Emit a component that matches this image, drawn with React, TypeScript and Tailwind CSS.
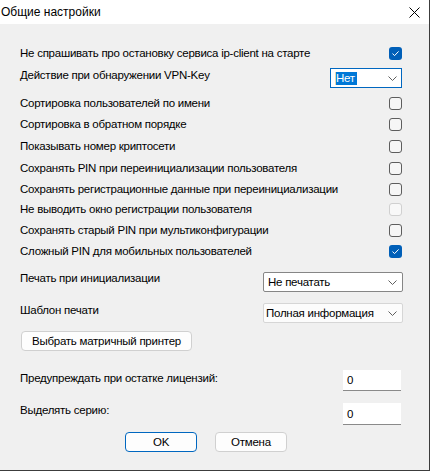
import React from "react";

function Check({ state }: { state: "on" | "off" | "disabled" }) {
  if (state === "on") {
    return (
      <div className="w-[13px] h-[13px] rounded-[3px] bg-[#005fb8] flex items-center justify-center shrink-0">
        <svg width="9" height="7" viewBox="0 0 9 7" fill="none">
          <path d="M1.5 3.6 L3.6 5.6 L7.6 1.4" stroke="white" strokeWidth="1" />
        </svg>
      </div>
    );
  }
  if (state === "disabled") {
    return <div className="w-[13px] h-[13px] rounded-[3px] border border-[#d0d0d0] bg-[#f8f8f8] shrink-0" />;
  }
  return <div className="w-[13px] h-[13px] rounded-[3px] border border-[#5d5d5d] bg-[#f6f6f6] shrink-0" />;
}

function Chevron() {
  return (
    <svg width="9" height="5" viewBox="0 0 9 5" fill="none" className="shrink-0">
      <path d="M0.5 0.5 L4.5 4.5 L8.5 0.5" stroke="#5f5f5f" strokeWidth="1" />
    </svg>
  );
}

function CheckRow({ label, state, mt }: { label: string; state: "on" | "off" | "disabled"; mt: string }) {
  return (
    <div className={`flex items-center justify-between h-[13px] ${mt}`}>
      <span className="leading-[13px] whitespace-nowrap">{label}</span>
      <Check state={state} />
    </div>
  );
}

export default function App() {
  return (
    <div className="w-[430px] h-[471px] bg-[#f0f0f0] border-r border-b border-[#3c3c3c] font-['Segoe_UI','Liberation_Sans',sans-serif] text-[11.5px] tracking-[-0.25px] text-black flex flex-col overflow-hidden">
      <div className="h-[24px] bg-white flex items-center justify-between pl-[1px] pr-[9px] shrink-0">
        <span className="leading-[16px] text-[12px] tracking-normal">Общие настройки</span>
        <svg width="11" height="11" viewBox="0 0 11 11" fill="none">
          <path d="M0.5 0.5 L10.5 10.5 M10.5 0.5 L0.5 10.5" stroke="#000" strokeWidth="1" />
        </svg>
      </div>

      <div className="flex flex-col pl-[20px] pr-[27px] pt-[23px]">
        <CheckRow label="Не спрашивать про остановку сервиса ip-client на старте" state="on" mt="mt-0" />

        <div className="flex items-start justify-between h-[20px] mt-[8px]">
          <span className="leading-[16px] mt-[-1px] whitespace-nowrap">Действие при обнаружении VPN-Key</span>
          <div className="w-[72px] h-[20px] bg-white border border-[#0067c0] flex items-center justify-between pl-[4px] pr-[4px]">
            <div className="flex items-center h-[13px]">
              <span className="w-[1px] h-[13px] bg-[#e8d8b0]" />
              <span className="bg-[#0078d7] text-white leading-[13px] h-[13px] pr-[2px]">Нет</span>
            </div>
            <Chevron />
          </div>
        </div>

        <CheckRow label="Сортировка пользователей по имени" state="off" mt="mt-[9px]" />
        <CheckRow label="Сортировка в обратном порядке" state="off" mt="mt-[8px]" />
        <CheckRow label="Показывать номер криптосети" state="off" mt="mt-[9px]" />
        <CheckRow label="Сохранять PIN при переинициализации пользователя" state="off" mt="mt-[9px]" />
        <CheckRow label="Сохранять регистрационные данные при переинициализации" state="off" mt="mt-[8px]" />
        <CheckRow label="Не выводить окно регистрации пользователя" state="disabled" mt="mt-[7px]" />
        <CheckRow label="Сохранять старый PIN при мультиконфигурации" state="off" mt="mt-[8px]" />
        <CheckRow label="Сложный PIN для мобильных пользователей" state="on" mt="mt-[8px]" />

        <div className="flex items-start justify-between h-[20px] mt-[14px]">
          <span className="leading-[16px] mt-[-2px] whitespace-nowrap">Печать при инициализации</span>
          <div className="w-[140px] h-[20px] mr-[-1px] bg-white border border-[#868686] rounded-[2px] flex items-center justify-between pl-[4px] pr-[5px]">
            <span className="leading-[16px]">Не печатать</span>
            <Chevron />
          </div>
        </div>

        <div className="flex items-start justify-between h-[20px] mt-[11px]">
          <span className="leading-[16px] mt-[-1px] whitespace-nowrap">Шаблон печати</span>
          <div className="w-[140px] h-[20px] mr-[-1px] bg-[#fcfcfc] border border-[#d6d6d6] rounded-[2px] flex items-center justify-between pl-[2px] pr-[5px]">
            <span className="leading-[16px]">Полная информация</span>
            <Chevron />
          </div>
        </div>

        <div className="flex mt-[8px] ml-[1px]">
          <div className="w-[171px] h-[20px] bg-[#fdfdfd] border border-[#d0d0d0] rounded-[4px] flex items-center justify-center">
            <span className="leading-[16px]">Выбрать матричный принтер</span>
          </div>
        </div>

        <div className="flex items-start justify-between h-[21px] mt-[19px]">
          <span className="leading-[16px] mt-[0px] whitespace-nowrap">Предупреждать при остатке лицензий:</span>
          <div className="w-[58px] h-[21px] mr-[1px] bg-white border-b border-[#8a8a8a] flex items-center pl-[4px]">
            <span className="leading-[16px]">0</span>
          </div>
        </div>

        <div className="flex items-start justify-between h-[22px] mt-[12px]">
          <span className="leading-[16px] mt-[-1px] whitespace-nowrap">Выделять серию:</span>
          <div className="w-[58px] h-[22px] mr-[1px] bg-white border-b border-[#8a8a8a] flex items-center pl-[4px]">
            <span className="leading-[16px]">0</span>
          </div>
        </div>

        <div className="flex justify-center gap-[18px] mt-[7px] pr-[10px]">
          <div className="w-[72px] h-[20px] bg-[#fdfdfd] border border-[#0067c0] rounded-[4px] flex items-center justify-center">
            <span className="leading-[16px]">OK</span>
          </div>
          <div className="w-[72px] h-[20px] bg-[#fdfdfd] border border-[#d0d0d0] rounded-[4px] flex items-center justify-center">
            <span className="leading-[16px]">Отмена</span>
          </div>
        </div>
      </div>
    </div>
  );
}
